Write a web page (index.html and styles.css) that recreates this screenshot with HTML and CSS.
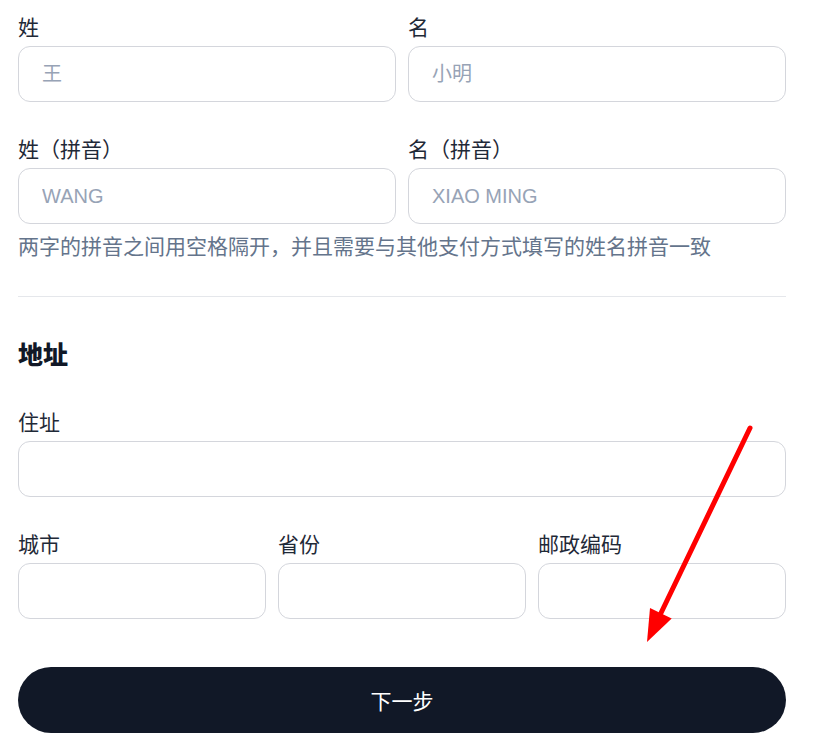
FILE: index.html
```html
<!DOCTYPE html>
<html lang="zh-CN">
<head>
<meta charset="utf-8">
<title>地址</title>
<link rel="stylesheet" href="styles.css">
</head>
<body>
<main class="form">
  <div class="row two">
    <div class="field">
      <label class="label">姓</label>
      <input class="input" placeholder="王">
    </div>
    <div class="field">
      <label class="label">名</label>
      <input class="input" placeholder="小明">
    </div>
  </div>
  <div class="row two gap-top">
    <div class="field">
      <label class="label">姓（拼音）</label>
      <input class="input" placeholder="WANG">
    </div>
    <div class="field">
      <label class="label">名（拼音）</label>
      <input class="input" placeholder="XIAO MING">
    </div>
  </div>
  <p class="hint">两字的拼音之间用空格隔开，并且需要与其他支付方式填写的姓名拼音一致</p>
  <hr class="divider">
  <h2 class="heading">地址</h2>
  <div class="field">
    <label class="label">住址</label>
    <input class="input">
  </div>
  <div class="row three gap-top">
    <div class="field">
      <label class="label">城市</label>
      <input class="input">
    </div>
    <div class="field">
      <label class="label">省份</label>
      <input class="input">
    </div>
    <div class="field">
      <label class="label">邮政编码</label>
      <input class="input">
    </div>
  </div>
  <button class="submit" type="button">下一步</button>
</main>
<svg class="arrow" width="140" height="240" viewBox="0 0 140 240">
  <line x1="120" y1="8" x2="31" y2="193" stroke="#ff0000" stroke-width="5" stroke-linecap="round"/>
  <polygon points="17,222 20,188 41.7,198.4" fill="#ff0000"/>
</svg>
</body>
</html>
```
FILE: styles.css
```css
* { box-sizing: border-box; }
html, body { margin: 0; padding: 0; background: #ffffff; }
body {
  font-family: "Noto Sans CJK SC", "Liberation Sans", sans-serif;
  color: #1f2937;
  position: relative;
  height: 749px;
  overflow: hidden;
}
.form {
  padding: 12px 33px 0 18px;
  display: flex;
  flex-direction: column;
}
.row { display: grid; column-gap: 12px; }
.row.two { grid-template-columns: minmax(0, 1fr) minmax(0, 1fr); }
.row.three { grid-template-columns: minmax(0, 1fr) minmax(0, 1fr) minmax(0, 1fr); }
.gap-top { margin-top: 32px; }
.field { display: flex; flex-direction: column; min-width: 0; }
.label {
  font-size: 21px;
  line-height: 28px;
  margin-bottom: 6px;
  color: #1f2937;
}
.input {
  width: 100%;
  min-width: 0;
  height: 56px;
  border: 1px solid #d4d6dc;
  border-radius: 12px;
  padding: 0 23px;
  font-family: "Liberation Sans", "Noto Sans CJK SC", sans-serif;
  font-size: 20px;
  color: #1f2937;
  background: #fff;
  outline: none;
}
.input::placeholder { color: #97a3b6; }
.hint {
  margin: 7px 0 0;
  font-size: 21px;
  line-height: 28px;
  color: #64748b;
  white-space: nowrap;
}
.divider {
  margin: 37px 0 0;
  border: 0;
  border-top: 1px solid #e5e7eb;
  height: 0;
}
.heading {
  margin: 40px 0 38px;
  font-size: 25px;
  line-height: 32px;
  font-weight: 900;
  color: #111827;
}
.submit {
  margin-top: 48px;
  height: 66px;
  border: 0;
  border-radius: 33px;
  background: #111827;
  color: #ffffff;
  font-family: "Noto Sans CJK SC", sans-serif;
  font-size: 21px;
}
.arrow {
  position: absolute;
  left: 630px;
  top: 420px;
}
```
